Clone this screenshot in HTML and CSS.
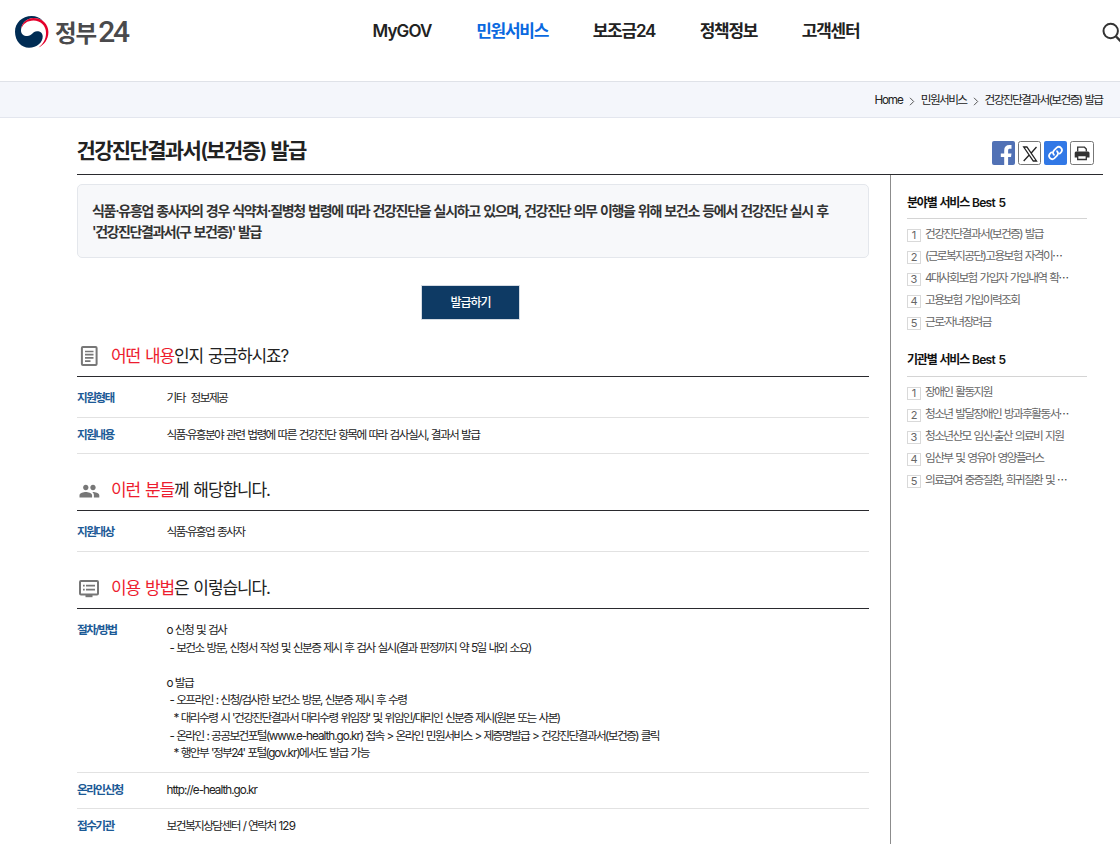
FILE: index.html
```html
<!DOCTYPE html>
<html lang="ko">
  <head>
    <meta charset="UTF-8" />
    <meta name="viewport" content="width=device-width, initial-scale=1.0" />
    <title>건강진단결과서(보건증) 발급 | 정부24</title>
    <link rel="stylesheet" href="styles.css">
  </head>
  <body>
    <header class="header">
      <a class="logo">
        <svg width="34" height="34" viewBox="0 0 34 34">
          <path fill="#002c54" d="M28 6C25 2.500 21 1 16.700 1 7 1 0 8 0 16.700 0 26 6.500 32.700 14 32.700c8 0 13.700-5.200 13.700-11.200 0-3.500-2.700-5.300-5.700-5.200-4.500.2-5 4.700-9.700 4.700C8.500 21 6 19 6 15.500 6 8 12 3 18.500 3 22 3 25.500 4 28 6z" />
          <path fill="#e4002b" d="M6.200 14C7 7 12.500 3 18.500 3c8.500 0 14.900 6 14.900 14 0 7.500-4.400 13-9.900 15.500C28.500 28.500 31 24 31 18 31 10.500 25.500 5.500 18.500 5.500 12 5.500 8 9 6.200 14z" />
        </svg>
        <span class="logo-text">정부<span class="logo-num">24</span></span>
      </a>
      <nav class="gnb">
        <a class="latin">MyGOV</a>
        <a class="on">민원서비스</a>
        <a>보조금24</a>
        <a>정책정보</a>
        <a>고객센터</a>
      </nav>
      <svg class="search" width="24" height="24" viewBox="0 0 24 24" fill="none" stroke="#333" stroke-width="2">
        <circle cx="8.700" cy="9" r="7.200" />
        <path d="M14 14.500l7 7" stroke-width="2.400" />
      </svg>
    </header>

    <div class="breadcrumb">
      <a class="home">Home</a>
      <svg width="6" height="9" viewBox="0 0 6 9"><path d="M1 .8l3.700 3.700L1 8.200" /></svg>
      <a>민원서비스</a>
      <svg width="6" height="9" viewBox="0 0 6 9"><path d="M1 .8l3.700 3.700L1 8.200" /></svg>
      <a>건강진단결과서(보건증) 발급</a>
    </div>

    <div class="container">
      <div class="title-bar">
        <h1>건강진단결과서(보건증) 발급</h1>
        <div class="sns">
          <svg width="24" height="24" viewBox="0 0 24 24">
            <rect width="23" height="24" rx="2" fill="#5171b5" />
            <path fill="#fff" d="M12.200 24v-8H8.800v-3.600h3.400V9.500c0-3.600 1.800-5.500 5.200-5.500h2.100v3.800h-1.500c-1.400 0-1.900.6-1.900 1.900v2.700h3.400l-.5 3.600h-2.900V24z" />
          </svg>
          <svg width="24" height="24" viewBox="0 0 24 24">
            <rect x=".5" y=".5" width="22" height="23" rx="2" fill="#fff" stroke="#777" />
            <path fill="none" stroke="#222" stroke-width="1.300" d="M5.700 6h3.200l9.600 14h-3.200zM18.500 6l-5.700 6.500M11.200 14L5.700 20" />
          </svg>
          <svg width="24" height="24" viewBox="0 0 24 24">
            <rect width="23" height="24" rx="2" fill="#3178e6" />
            <g fill="none" stroke="#fff" stroke-width="1.700" stroke-linecap="round">
              <path d="M10 13.800a3.200 3.200 0 0 1 0-4.500l2.700-2.700a3.200 3.200 0 0 1 4.500 4.500L15.700 12.600" />
              <path d="M13 10.200a3.200 3.200 0 0 1 0 4.500l-2.700 2.700a3.200 3.200 0 0 1-4.500-4.500l1.500-1.500" />
            </g>
          </svg>
          <svg width="24" height="24" viewBox="0 0 24 24">
            <rect x=".5" y=".5" width="23" height="23" rx="2" fill="#fff" stroke="#777" />
            <path fill="none" stroke="#333" stroke-width="1.300" d="M7.700 10.500V6.200h6.800l1.800 1.800v2.500" />
            <path fill="#333" d="M6 10.500h12a1.500 1.500 0 0 1 1.500 1.500v4.500H4.700V12A1.500 1.500 0 0 1 6 10.500z" />
            <path fill="#fff" stroke="#333" stroke-width="1.300" d="M7.700 14.500h8.600v4H7.700z" />
          </svg>
        </div>
      </div>

      <div class="content">
        <main class="main">
          <div class="summary">
            <p>식품·유흥업 종사자의 경우 식약처·질병청 법령에 따라 건강진단을 실시하고 있으며, 건강진단 의무 이행을 위해 보건소 등에서 건강진단 실시 후</p>
            <p>'건강진단결과서(구 보건증)' 발급</p>
          </div>
          <button class="btn-apply">발급하기</button>

          <section>
            <h2>
              <svg width="24" height="24" viewBox="0 0 24 24" fill="none" stroke="#777">
                <rect x="4.900" y="2.900" width="14.700" height="18.200" rx="1" stroke-width="2" />
                <path d="M8 7.500h8.500M8 10.700h8.500M8 13.900h8.500M8 17.200h5.500" stroke-width="1.700" />
              </svg>
              <span><em>어떤 내용</em>인지 궁금하시죠?</span>
            </h2>
            <dl>
              <div class="row">
                <dt>지원형태</dt>
                <dd>기타&nbsp; 정보제공</dd>
              </div>
              <div class="row">
                <dt>지원내용</dt>
                <dd>식품·유흥분야 관련 법령에 따른 건강진단 항목에 따라 검사실시, 결과서 발급</dd>
              </div>
            </dl>
          </section>

          <section>
            <h2>
              <svg width="24" height="24" viewBox="0 0 24 24" fill="#777">
                <path d="M16 11c1.660 0 2.990-1.340 2.990-3S17.660 5 16 5s-3 1.340-3 3 1.340 3 3 3zm-8 0c1.660 0 2.990-1.340 2.990-3S9.660 5 8 5 5 6.340 5 8s1.340 3 3 3zm0 2c-2.330 0-7 1.170-7 3.500V19h14v-2.500c0-2.330-4.670-3.500-7-3.500zm8 0c-.29 0-.62.020-.97.050 1.160.840 1.970 1.970 1.970 3.450V19h6v-2.500c0-2.330-4.670-3.500-7-3.500z" transform="translate(1.600 2.300) scale(.9)" />
              </svg>
              <span><em>이런 분들</em>께 해당합니다.</span>
            </h2>
            <dl>
              <div class="row">
                <dt>지원대상</dt>
                <dd>식품·유흥업 종사자</dd>
              </div>
            </dl>
          </section>

          <section>
            <h2>
              <svg width="24" height="24" viewBox="0 0 24 24" fill="none" stroke="#777">
                <rect x="3" y="5" width="18" height="13.500" rx="1" stroke-width="2" />
                <path d="M9 9.700h9M9 13.700h9M6 9.700h1.700M6 13.700h1.700" stroke-width="1.800" />
                <path d="M8.500 20h7" stroke-width="2.400" />
              </svg>
              <span><em>이용 방법</em>은 이렇습니다.</span>
            </h2>
            <dl>
              <div class="row">
                <dt>절차/방법</dt>
                <dd>
                  <p>o 신청 및 검사</p>
                  <p class="dash">- 보건소 방문, 신청서 작성 및 신분증 제시 후 검사 실시(결과 판정까지 약 5일 내외 소요)</p>
                  <p>&nbsp;</p>
                  <p>o 발급</p>
                  <p class="dash">- 오프라인 : 신청/검사한 보건소 방문, 신분증 제시 후 수령</p>
                  <p class="star">* 대리수령 시 '건강진단결과서 대리수령 위임장' 및 위임인/대리인 신분증 제시(원본 또는 사본)</p>
                  <p class="dash">- 온라인 : 공공보건포털(<span class="latin">www.e-health.go.kr</span>) 접속 &gt; 온라인 민원서비스 &gt; 제증명발급 &gt; 건강진단결과서(보건증) 클릭</p>
                  <p class="star">* 행안부 '정부24' 포털(<span class="latin">gov.kr</span>)에서도 발급 가능</p>
                </dd>
              </div>
              <div class="row">
                <dt>온라인신청</dt>
                <dd><a class="latin">http://e-health.go.kr</a></dd>
              </div>
              <div class="row">
                <dt>접수기관</dt>
                <dd>보건복지상담센터 / 연락처 <span class="num">129</span></dd>
              </div>
            </dl>
          </section>
        </main>

        <aside class="side">
          <h3>분야별 서비스 <span class="latin">Best 5</span></h3>
          <ol>
            <li><i>1</i>건강진단결과서(보건증) 발급</li>
            <li><i>2</i>(근로복지공단)고용보험 자격이<span class="more">…</span></li>
            <li><i>3</i>4대사회보험 가입자 가입내역 확<span class="more">…</span></li>
            <li><i>4</i>고용보험 가입이력조회</li>
            <li><i>5</i>근로·자녀장려금</li>
          </ol>
          <h3>기관별 서비스 <span class="latin">Best 5</span></h3>
          <ol>
            <li><i>1</i>장애인 활동지원</li>
            <li><i>2</i>청소년 발달장애인 방과후활동서<span class="more">…</span></li>
            <li><i>3</i>청소년산모 임신·출산 의료비 지원</li>
            <li><i>4</i>임산부 및 영유아 영양플러스</li>
            <li><i>5</i>의료급여 중증질환, 희귀질환 및 <span class="more">…</span></li>
          </ol>
        </aside>
      </div>
    </div>
  </body>
</html>
```

FILE: styles.css
```css
* {
  margin: 0;
  padding: 0;
  box-sizing: border-box;
}
body {
  height: 844px;
  overflow: hidden;
  background: #fff;
  color: #222;
  font-family: Inter, "Noto Sans CJK KR", sans-serif;
  font-size: 11.7px;
  line-height: 17.6px;
  letter-spacing: -1.6px;
  word-spacing: 1.15px;
  white-space: nowrap;
}
.latin {
  letter-spacing: -1px;
}
.num {
  letter-spacing: -0.8px;
}

/* header */
.header {
  display: flex;
  width: 1126px;
  height: 82px;
  border-bottom: 1px solid #dfe2e8;
}
.logo {
  display: flex;
  width: 372.5px;
  padding: 15px 0 0 15px;
}
.logo-text {
  margin-left: 6px;
  line-height: 34px;
  font-size: 23.5px;
  font-weight: 600;
  letter-spacing: -1px;
  color: #4a4a4c;
}
.logo-num {
  margin-left: 2px;
  font-family: Roboto, sans-serif;
  font-size: 30px;
  font-weight: 500;
  letter-spacing: -2.2px;
}
.gnb {
  display: flex;
  gap: 44.6px;
  padding-top: 18px;
  font-size: 17px;
  line-height: 26px;
  font-weight: 600;
  letter-spacing: -1.25px;
}
.gnb .latin {
  letter-spacing: -0.85px;
}
.gnb .on {
  color: #0a69e0;
}
.search {
  margin: 22px 0 0 auto;
}

/* breadcrumb */
.breadcrumb {
  display: flex;
  justify-content: flex-end;
  align-items: center;
  gap: 6px;
  height: 36px;
  padding: 2px 17.5px 0 0;
  background: #f4f6fb;
  border-bottom: 1px solid #e3e6ee;
}
.breadcrumb .home {
  letter-spacing: -1.1px;
}
.breadcrumb svg {
  margin-top: 1px;
  fill: none;
  stroke: #555;
}

/* title */
.container {
  width: 1026px;
  margin-left: 77px;
}
.title-bar {
  display: flex;
  justify-content: space-between;
  height: 57px;
  border-bottom: 1px solid #2a2a2e;
}
h1 {
  padding-top: 18px;
  font-size: 21px;
  line-height: 30px;
  font-weight: 600;
  letter-spacing: -1.65px;
  text-indent: -0.5px;
}
.sns {
  display: flex;
  gap: 2px;
  padding: 23px 9px 0 0;
}
.content {
  display: flex;
}
.main {
  width: 792px;
  padding-top: 9px;
}

.summary {
  height: 74px;
  padding: 15px 14px;
  border: 1px solid #e4e7ec;
  border-radius: 5px;
  background: #f7f8fa;
  color: #333;
  font-size: 14px;
  line-height: 21px;
  font-weight: 600;
  letter-spacing: -1.3px;
  word-spacing: 1px;
}
.summary p + p {
  letter-spacing: -1.43px;
}
.btn-apply {
  display: block;
  width: 99px;
  height: 35px;
  margin: 27px auto 0 344px;
  border: 1px solid #d5dbe3;
  background: #0e3a64;
  color: #fff;
  font: 500 12px/30px Inter, "Noto Sans CJK KR", sans-serif;
  letter-spacing: -1px;
}

/* sections */
h2 {
  display: flex;
  align-items: flex-end;
  height: 57px;
  padding-bottom: 7px;
  border-bottom: 1px solid #2a2a2e;
  font-size: 17px;
  line-height: 26px;
  font-weight: 400;
  letter-spacing: -1.1px;
}
h2 svg {
  margin: 0 10.5px 1px -0.5px;
}
h2 em {
  font-style: normal;
  color: #ed1c2e;
}
.row {
  display: flex;
  padding: 9.2px 0 8.2px;
  border-bottom: 1px solid #e2e2e2;
}
.row:first-child {
  padding: 13px 0 9.4px;
}
dt {
  width: 89.6px;
  color: #1c5a96;
  font-weight: 600;
}
.dash {
  padding-left: 3px;
}
.star {
  padding-left: 7px;
}

/* best 5 */
.side {
  width: 213px;
  height: 680px;
  margin-left: 21px;
  padding: 14px 16px 0;
  border-left: 1px solid #8c8c8c;
}
h3 {
  height: 30px;
  line-height: 27px;
  border-bottom: 1px solid #d4d4d4;
  font-size: 12px;
  font-weight: 600;
  letter-spacing: -1.2px;
  color: #111;
}
h3 .latin {
  letter-spacing: -0.7px;
}
ol {
  height: 127px;
  padding-top: 4px;
  list-style: none;
}
ol + h3 {
  height: 31px;
}
li {
  display: flex;
  height: 22px;
  line-height: 22px;
  color: #666;
  white-space: pre;
}
li i {
  width: 14px;
  height: 13px;
  margin: 6px 4px 0 0;
  border: 1px solid #d9d9d9;
  font-size: 11px;
  font-style: normal;
  line-height: 10px;
  letter-spacing: 0;
  text-align: center;
}
.more {
  color: #444;
  font: 500 10.5px/22px "Noto Sans CJK KR", sans-serif;
}
```
